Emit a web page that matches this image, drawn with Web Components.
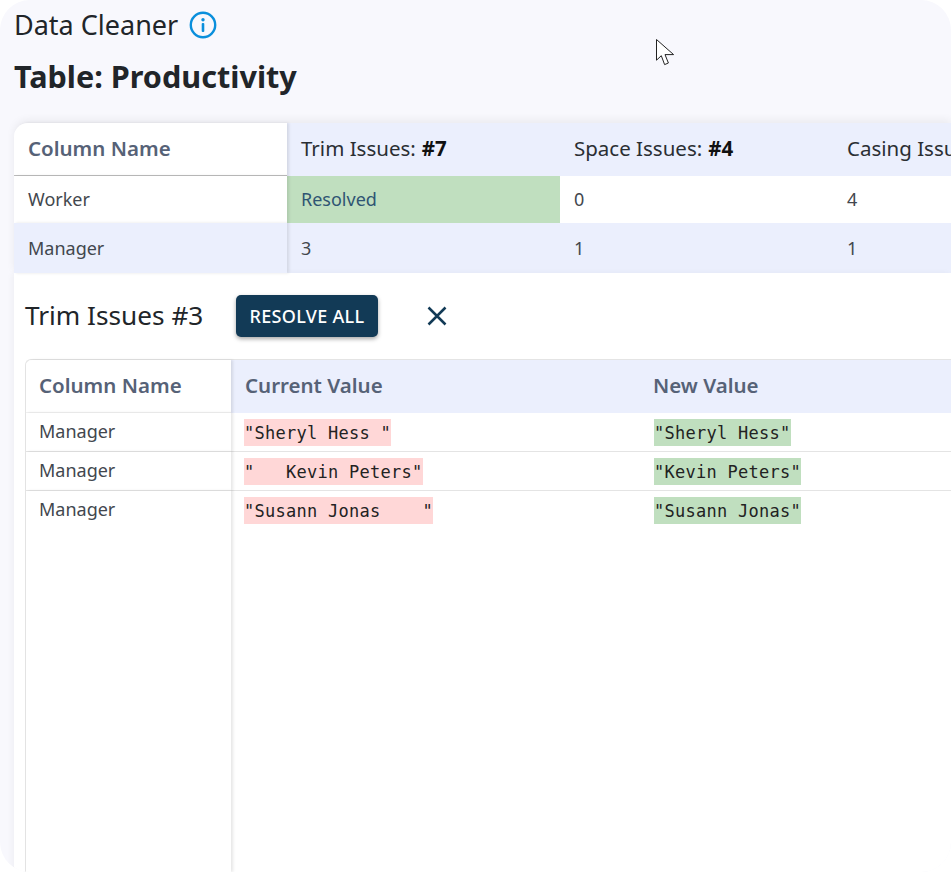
<!DOCTYPE html>
<html lang="en">
<head>
<meta charset="utf-8">
<title>Data Cleaner</title>
<style>
html, body {
    margin: 0;
    height: 100%;
    overflow: hidden;
    background: #ffffff;
}
</style>
</head>
<body>
<dc-app>
    <dc-page-title slot="title" table="Productivity"></dc-page-title>
    <dc-summary-table slot="summary"></dc-summary-table>
    <dc-detail-panel slot="detail" heading="Trim Issues #3"></dc-detail-panel>
</dc-app>

<script>
const FONT = `"Noto Sans", "Open Sans", sans-serif`;

class DcApp extends HTMLElement {
    constructor() {
        super();
        this.attachShadow({ mode: "open" }).innerHTML = `
<style>
:host {
    display: flex;
    flex-direction: column;
    position: relative;
    width: 951px;
    height: 872px;
    box-sizing: border-box;
    padding-left: 14px;
    overflow: hidden;
    border-radius: 30px;
    background: #f8f8fd;
    font-family: ${FONT};
    color: #212529;
}
#cursor {
    position: absolute;
    left: 656px;
    top: 39px;
}
</style>
<slot name="title"></slot>
<slot name="summary"></slot>
<slot name="detail"></slot>
<svg id="cursor" width="19" height="28" viewBox="0 0 19 28">
    <path d="M.5.5V21.2L5.3 16.7 8.6 25.6 12.4 24 9 15.6H17.6Z" fill="#fff" stroke="#222" stroke-width="1"/>
</svg>
`;
    }
}

class DcPageTitle extends HTMLElement {
    constructor() {
        super();
        this.attachShadow({ mode: "open" }).innerHTML = `
<style>
:host {
    display: block;
    height: 123px;
    flex: none;
}
#top {
    display: flex;
    align-items: center;
    gap: 11px;
    height: 50px;
    font-size: 27px;
}
#top span { padding-bottom: 2px; }
h1 {
    margin: 5px 0 0;
    font-size: 30.6px;
    line-height: 42px;
    font-weight: 700;
}
svg { display: block; }
</style>
<div id="top">
    <span>Data Cleaner</span>
    <svg width="28" height="28" viewBox="0 0 28 28">
        <circle cx="14" cy="14" r="12.2" fill="none" stroke="#0a8fdc" stroke-width="2.4"/>
        <circle cx="14" cy="8.7" r="1.7" fill="#0a8fdc"/>
        <rect x="12.7" y="12" width="2.6" height="9" rx="1" fill="#0a8fdc"/>
    </svg>
</div>
<h1 id="name"></h1>
`;
    }

    connectedCallback() {
        this.shadowRoot.getElementById("name").textContent = `Table: ${this.getAttribute("table")}`;
    }
}

class DcSummaryTable extends HTMLElement {
    constructor() {
        super();
        this.attachShadow({ mode: "open" }).innerHTML = `
<style>
:host {
    display: grid;
    grid-template-columns: repeat(4, 273px);
    grid-template-rows: 53px 47px 50px;
    flex: none;
    font-size: 18px;
    box-shadow: 0 -3px 8px rgba(0, 0, 0, .06);
    border-top-left-radius: 14px;
}
div {
    display: flex;
    align-items: center;
    box-sizing: border-box;
    padding: 0 0 2px 14px;
    white-space: nowrap;
    background: #fff;
    color: #42474e;
}
.head { background: #ebeffd; color: #2a2e33; font-size: 20.5px; padding-bottom: 3px; }
.head b { margin-left: 6px; color: #111; }
.name { box-shadow: 2px 0 3px rgba(0, 0, 0, .1); position: relative; z-index: 1; }
.corner {
    background: #fff;
    color: #566277;
    font-size: 20.5px;
    font-weight: 600;
    border-bottom: 1px solid #bdbdbd;
    border-top-left-radius: 14px;
}
.alt { background: #ebeffd; padding-bottom: 0; }
.done { background: #c0dfbf; color: #2f5573; }
</style>
<div class="corner name">Column Name</div>
<div class="head">Trim Issues: <b>#7</b></div>
<div class="head">Space Issues: <b>#4</b></div>
<div class="head">Casing Issues: <b>#5</b></div>
<div class="name">Worker</div>
<div class="done">Resolved</div>
<div>0</div>
<div>4</div>
<div class="name alt">Manager</div>
<div class="alt">3</div>
<div class="alt">1</div>
<div class="alt">1</div>
`;
    }
}

class DcCodeValue extends HTMLElement {
    constructor() {
        super();
        this.attachShadow({ mode: "open" }).innerHTML = `<style>
:host {
    display: inline-block;
    height: 27px;
    line-height: 29px;
    font-family: "DejaVu Sans Mono", monospace;
    font-size: 17px;
    letter-spacing: .27px;
    color: #222;
    background: #ffd7d7;
}
:host([kind="new"]) { background: #c0dfbf; }
slot { white-space: pre; }
</style><slot></slot>`;
    }
}

class DcDetailPanel extends HTMLElement {
    constructor() {
        super();
        this.attachShadow({ mode: "open" }).innerHTML = `
<style>
:host {
    display: flex;
    flex-direction: column;
    flex: 1;
    box-sizing: border-box;
    padding: 22px 0 0 11px;
    background: #fff;
    min-height: 0;
    box-shadow: -2px 0 6px rgba(0, 0, 0, .04);
}
#bar {
    display: flex;
    align-items: center;
    height: 42px;
    flex: none;
}
h2 {
    margin: 0 0 2px;
    width: 211px;
    font-size: 26.2px;
    font-weight: 400;
}
button {
    width: 142px;
    height: 42px;
    padding: 0;
    border: 0;
    border-radius: 5px;
    background: #123a56;
    color: #fff;
    font: 500 18px ${FONT};
    letter-spacing: .3px;
    box-shadow: 0 2px 4px rgba(0, 0, 0, .35);
}
#close { display: block; margin-left: 48px; }
#table {
    display: grid;
    grid-template-columns: 205px 409px 1fr;
    grid-template-rows: 53px 39px 39px 1fr;
    flex: 1;
    margin-top: 22px;
    border: solid #e4e4e4;
    border-width: 1px 0 0 1px;
    border-top-left-radius: 6px;
    font-size: 18px;
    color: #42474e;
}
#table > div {
    display: flex;
    align-items: center;
    box-sizing: border-box;
    padding-left: 13px;
    white-space: nowrap;
}
.line { border-bottom: 1px solid #e4e4e4; }
#table > .head {
    background: #ebeffd;
    color: #566277;
    font-size: 20.5px;
    font-weight: 600;
    padding-bottom: 3px;
}
#table > .cur { padding-left: 14px; }
#table > .cn { box-shadow: 2px 0 3px rgba(0, 0, 0, .1); position: relative; z-index: 1; background: #fff; }
#table > .corner { background: #fff; border-bottom: 1px solid #f1f1f1; border-top-left-radius: 6px; }
#table > .top { align-items: flex-start; padding-top: 6px; }
#table > .val { align-items: flex-start; padding-top: 6px; }
#table > .new { padding-left: 14px; }
</style>
<div id="bar">
    <h2 id="heading"></h2>
    <button type="button">RESOLVE ALL</button>
    <svg id="close" width="22" height="22" viewBox="0 0 22 22">
        <path d="M2.5 2.5 19.5 19.5M19.5 2.5 2.5 19.5" stroke="#123a56" stroke-width="2.5" fill="none"/>
    </svg>
</div>
<div id="table">
    <div class="head cn corner">Column Name</div>
    <div class="head cur">Current Value</div>
    <div class="head">New Value</div>

    <div class="cn top line">Manager</div>
    <div class="val line"><dc-code-value>"Sheryl Hess "</dc-code-value></div>
    <div class="val new line"><dc-code-value kind="new">"Sheryl Hess"</dc-code-value></div>

    <div class="cn top line">Manager</div>
    <div class="val line"><dc-code-value>"   Kevin Peters"</dc-code-value></div>
    <div class="val new line"><dc-code-value kind="new">"Kevin Peters"</dc-code-value></div>

    <div class="cn top">Manager</div>
    <div class="val"><dc-code-value>"Susann Jonas    "</dc-code-value></div>
    <div class="val new"><dc-code-value kind="new">"Susann Jonas"</dc-code-value></div>
</div>
`;
    }

    connectedCallback() {
        this.shadowRoot.getElementById("heading").textContent = this.getAttribute("heading");
    }
}

window.customElements.define("dc-code-value", DcCodeValue);
window.customElements.define("dc-page-title", DcPageTitle);
window.customElements.define("dc-summary-table", DcSummaryTable);
window.customElements.define("dc-detail-panel", DcDetailPanel);
window.customElements.define("dc-app", DcApp);
</script>
</body>
</html>
